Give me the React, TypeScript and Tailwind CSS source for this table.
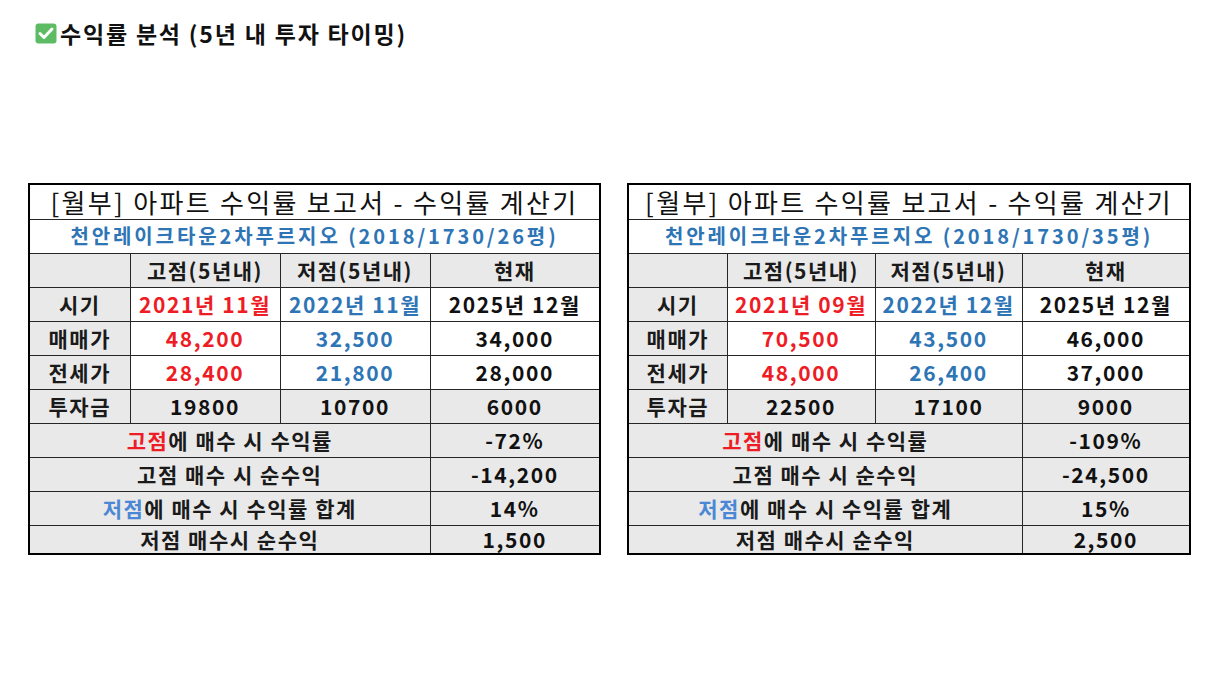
import type { FC, ReactNode } from "react";

const RED = "text-[#ee1c25]";
const BLUE = "text-[#2e75b6]";

type Report = {
  name: string;
  widths: number[];
  high: { when: string; sale: string; jeonse: string; invest: string };
  low: { when: string; sale: string; jeonse: string; invest: string };
  now: { when: string; sale: string; jeonse: string; invest: string };
  highRate: string;
  highProfit: string;
  lowRate: string;
  lowProfit: string;
};

const reports: Report[] = [
  {
    name: "천안레이크타운2차푸르지오 (2018/1730/26평)",
    widths: [101, 150, 150, 170],
    high: { when: "2021년 11월", sale: "48,200", jeonse: "28,400", invest: "19800" },
    low: { when: "2022년 11월", sale: "32,500", jeonse: "21,800", invest: "10700" },
    now: { when: "2025년 12월", sale: "34,000", jeonse: "28,000", invest: "6000" },
    highRate: "-72%",
    highProfit: "-14,200",
    lowRate: "14%",
    lowProfit: "1,500",
  },
  {
    name: "천안레이크타운2차푸르지오 (2018/1730/35평)",
    widths: [99, 148, 147, 168],
    high: { when: "2021년 09월", sale: "70,500", jeonse: "48,000", invest: "22500" },
    low: { when: "2022년 12월", sale: "43,500", jeonse: "26,400", invest: "17100" },
    now: { when: "2025년 12월", sale: "46,000", jeonse: "37,000", invest: "9000" },
    highRate: "-109%",
    highProfit: "-24,500",
    lowRate: "15%",
    lowProfit: "2,500",
  },
];

const Cell: FC<{ children?: ReactNode; gray?: boolean; span?: number; className?: string }> = ({
  children,
  gray,
  span,
  className = "",
}) => (
  <td
    colSpan={span}
    className={`border border-[#262626] p-0 text-center align-middle whitespace-nowrap ${
      gray ? "bg-[#e9e9e9]" : "bg-white"
    } ${className}`}
  >
    {children}
  </td>
);

const ReportTable: FC<{ r: Report }> = ({ r }) => {
  const total = r.widths.reduce((a, b) => a + b, 0);
  const val = "text-[21px] font-bold tracking-[1.6px] leading-none";
  const label = "text-[21px] font-bold tracking-[1.5px] leading-none text-[#1a1a1a]";
  return (
    <table
      className="border-collapse table-fixed border-2 border-black"
      style={{ width: total }}
    >
      <colgroup>
        {r.widths.map((w, i) => (
          <col key={i} style={{ width: w }} />
        ))}
      </colgroup>
      <tbody>
        <tr className="h-[35px]">
          <Cell span={4} className="text-[26px] leading-none tracking-[2.3px] text-[#111]">
            [월부] 아파트 수익률 보고서 - 수익률 계산기
          </Cell>
        </tr>
        <tr className="h-[34px]">
          <Cell span={4} className={`text-[20px] font-bold leading-none tracking-[2.9px] ${BLUE}`}>
            {r.name}
          </Cell>
        </tr>
        <tr className="h-[34px]">
          <Cell gray />
          <Cell gray className={label}>고점(5년내)</Cell>
          <Cell gray className={label}>저점(5년내)</Cell>
          <Cell gray className={label}>현재</Cell>
        </tr>
        <tr className="h-[34px]">
          <Cell gray className={label}>시기</Cell>
          <Cell className={`${val} ${RED}`}>{r.high.when}</Cell>
          <Cell className={`${val} ${BLUE}`}>{r.low.when}</Cell>
          <Cell className={`${val} text-[#111]`}>{r.now.when}</Cell>
        </tr>
        <tr className="h-[34px]">
          <Cell gray className={label}>매매가</Cell>
          <Cell className={`${val} ${RED}`}>{r.high.sale}</Cell>
          <Cell className={`${val} ${BLUE}`}>{r.low.sale}</Cell>
          <Cell className={`${val} text-[#111]`}>{r.now.sale}</Cell>
        </tr>
        <tr className="h-[34px]">
          <Cell gray className={label}>전세가</Cell>
          <Cell className={`${val} ${RED}`}>{r.high.jeonse}</Cell>
          <Cell className={`${val} ${BLUE}`}>{r.low.jeonse}</Cell>
          <Cell className={`${val} text-[#111]`}>{r.now.jeonse}</Cell>
        </tr>
        <tr className="h-[34px]">
          <Cell gray className={label}>투자금</Cell>
          <Cell gray className={`${val} text-[#111]`}>{r.high.invest}</Cell>
          <Cell gray className={`${val} text-[#111]`}>{r.low.invest}</Cell>
          <Cell gray className={`${val} text-[#111]`}>{r.now.invest}</Cell>
        </tr>
        <tr className="h-[34px]">
          <Cell gray span={3} className={label}>
            <span className={RED}>고점</span>에 매수 시 수익률
          </Cell>
          <Cell gray className={`${val} text-[#111]`}>{r.highRate}</Cell>
        </tr>
        <tr className="h-[34px]">
          <Cell gray span={3} className={label}>고점 매수 시 순수익</Cell>
          <Cell gray className={`${val} text-[#111]`}>{r.highProfit}</Cell>
        </tr>
        <tr className="h-[34px]">
          <Cell gray span={3} className={label}>
            <span className="text-[#4a88d6]">저점</span>에 매수 시 수익률 합계
          </Cell>
          <Cell gray className={`${val} text-[#111]`}>{r.lowRate}</Cell>
        </tr>
        <tr className="h-[29px]">
          <Cell gray span={3} className={label}>저점 매수시 순수익</Cell>
          <Cell gray className={`${val} text-[#111]`}>{r.lowProfit}</Cell>
        </tr>
      </tbody>
    </table>
  );
};

export default function App() {
  return (
    <div
      className="w-[1216px] h-[684px] bg-white overflow-hidden"
      style={{ fontFamily: '"Noto Sans CJK KR", "Noto Sans", sans-serif' }}
    >
      <div className="flex items-center gap-[3px] pt-[20px] pl-[35px] h-[46px]">
        <svg width="22" height="21" viewBox="0 0 22 21">
          <rect x="0.5" y="0.5" width="21" height="20" rx="3" fill="#5dbb63" />
          <path
            d="M5 10.5 L9 14.5 L17 6"
            fill="none"
            stroke="#fff"
            strokeWidth="3"
            strokeLinecap="round"
            strokeLinejoin="round"
          />
        </svg>
        <span className="text-[23px] font-bold leading-[26px] tracking-[1.8px] text-[#111]">
          수익률 분석 (5년 내 투자 타이밍)
        </span>
      </div>
      <div className="flex items-start gap-[26px] pl-[28px] mt-[137px]">
        {reports.map((r, i) => (
          <ReportTable key={i} r={r} />
        ))}
      </div>
    </div>
  );
}
